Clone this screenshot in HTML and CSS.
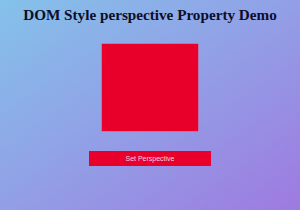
FILE: index.html
```html
<!DOCTYPE html>
<html>
<head>
<meta charset="utf-8">
<link rel="stylesheet" href="styles.css">
</head>
<body>
<div class="page">
  <h1 class="title">DOM Style perspective Property Demo</h1>
  <div class="stage">
    <div class="box"></div>
  </div>
  <button class="btn">Set Perspective</button>
</div>
</body>
</html>
```
FILE: styles.css
```css
html, body {
  margin: 0;
  padding: 0;
  width: 300px;
  height: 210px;
  overflow: hidden;
}
body {
  background: linear-gradient(to bottom right, #84c2ea 0%, #929fe6 50%, #9e7ae0 100%);
}
.page {
  display: flex;
  flex-direction: column;
  align-items: center;
}
.title {
  margin: 7px 0 0;
  font-family: "Liberation Serif", serif;
  font-weight: bold;
  font-size: 15.2px;
  line-height: 16px;
  text-align: center;
  white-space: nowrap;
  color: #0d0d2a;
}
.stage {
  margin-top: 21px;
  width: 96px;
  height: 87px;
}
.box {
  width: 96px;
  height: 87px;
  background: #e8002b;
  box-shadow: 0 0 0 0.5px #d9507a;
}
.btn {
  margin-top: 20px;
  width: 122px;
  height: 15px;
  padding: 0;
  border: none;
  background: #e8002b;
  color: #f2d5e0;
  font-family: "Liberation Sans", sans-serif;
  font-size: 7px;
}
```
